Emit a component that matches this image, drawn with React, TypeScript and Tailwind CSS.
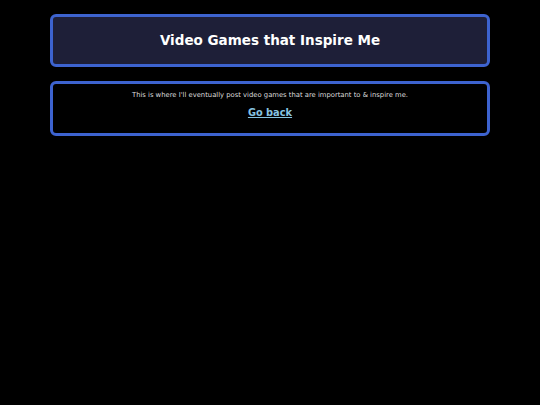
export default function App() {
  return (
    <div className="min-h-[405px] bg-black pt-[14px] font-['DejaVu_Sans',sans-serif]">
      <div className="mx-[50px] flex h-[53px] items-center justify-center rounded-[6px] border-[3px] border-[#3d63cf] bg-[#1e1f38]">
        <h1 className="text-[13.5px] font-bold text-white">Video Games that Inspire Me</h1>
      </div>
      <div className="mx-[50px] mt-[14px] flex h-[55px] flex-col items-center rounded-[6px] border-[3px] border-[#3d63cf] bg-black pt-[6px]">
        <p className="text-[6.8px] text-[#dddddd]">
          This is where I'll eventually post video games that are important to &amp; inspire me.
        </p>
        <a href="#" className="mt-[6px] text-[9.8px] font-bold text-[#87c3e0] underline">
          Go back
        </a>
      </div>
    </div>
  );
}
